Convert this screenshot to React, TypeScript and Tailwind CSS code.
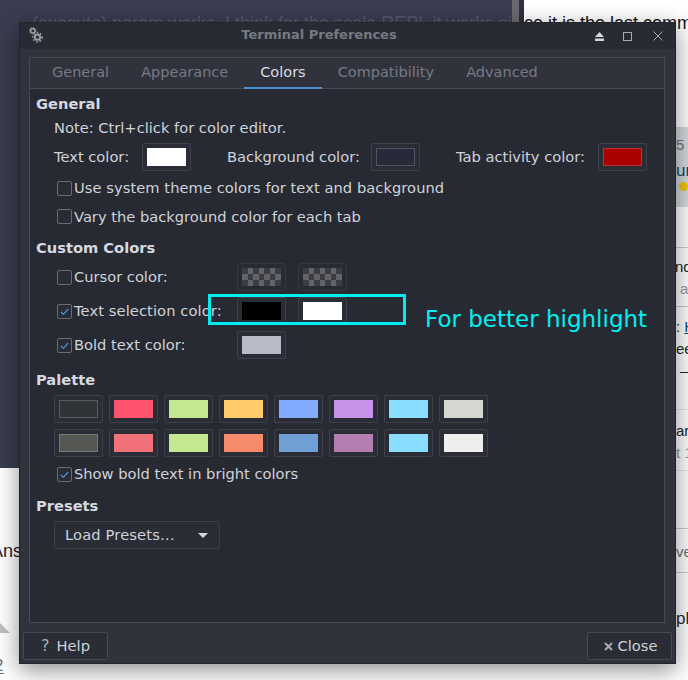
const tabs = ["General", "Appearance", "Colors", "Compatibility", "Advanced"];

const paletteTop = ["#2e3436", "#ff5370", "#c3e88d", "#ffcb6b", "#82aaff", "#c792ea", "#89ddff", "#d3d7cf"];
const paletteBottom = ["#555753", "#f07178", "#c3e88d", "#f78c6c", "#6f9fd4", "#b57eb0", "#89ddff", "#eeeeec"];

function Swatch({ color, outlined }: { color: string; outlined?: boolean }) {
  return (
    <div className="flex h-7 w-[49px] shrink-0 items-center justify-center rounded-[2px] border border-[#3d3f4a] bg-[#2a2c36]">
      <div
        className={`h-[18px] w-[39px] ${outlined ? "border border-white/20" : ""}`}
        style={{ backgroundColor: color }}
      />
    </div>
  );
}

function EmptySwatch() {
  const cells = Array.from({ length: 21 }, (_, i) => i);
  return (
    <div className="flex h-7 w-[49px] shrink-0 items-center justify-center rounded-[2px] border border-[#343640] bg-[#292b34]">
      <div className="grid h-[18px] w-[39px] grid-cols-7 grid-rows-3">
        {cells.map((c) => (
          <div key={c} className={c % 2 === 0 ? "bg-[#3c3d42]" : "bg-[#626368]"} />
        ))}
      </div>
    </div>
  );
}

function Check({ checked }: { checked?: boolean }) {
  return (
    <div className="flex h-[15px] w-[15px] shrink-0 items-center justify-center rounded-[2px] border border-[#6a6c74] bg-[#2a2c35]">
      {checked && (
        <svg width="11" height="11" viewBox="0 0 11 11" fill="none">
          <path d="M2 6l2.4 2.4L9.2 3" stroke="#4a90d9" strokeWidth="1.3" />
        </svg>
      )}
    </div>
  );
}

function Heading({ children, className }: { children: string; className?: string }) {
  return <div className={`flex h-5 items-center font-bold text-[#d5d9e0] ${className ?? ""}`}>{children}</div>;
}

function GearsIcon() {
  return (
    <svg width="14" height="16" viewBox="0 0 14 16" fill="none" className="text-[#9a9ca2]">
      <circle cx="3.8" cy="3.8" r="2.2" stroke="currentColor" strokeWidth="1.6" />
      <circle cx="3.8" cy="3.8" r="3.2" stroke="currentColor" strokeWidth="1" strokeDasharray="1.2 1.3" />
      <circle cx="8.5" cy="10.2" r="2.6" stroke="currentColor" strokeWidth="2" />
      <circle cx="8.5" cy="10.2" r="4.6" stroke="currentColor" strokeWidth="1.6" strokeDasharray="1.6 1.8" />
    </svg>
  );
}

function Background() {
  return (
    <div className="absolute inset-0 overflow-hidden bg-white font-['Liberation_Sans',sans-serif] text-[#242729]">
      {/* dark window behind */}
      <div className="absolute left-0 top-0 flex h-[468px] w-[524px] bg-[#3a3d50]">
        <div className="flex-1 overflow-hidden whitespace-nowrap pl-[32px] pt-[10px] text-[18px] text-[#55586b]">
          (execute) param works, I think for the scala REPL it works since
        </div>
        <div className="w-[7px] bg-[#6a6a70]" />
        <div className="w-[5px] bg-[#2f3140]" />
      </div>

      {/* page on the right, only its edge is visible */}
      <div className="absolute left-[524px] top-0 w-[164px] overflow-hidden whitespace-nowrap text-[15px]">
        <div className="h-[127px] pt-[10px] text-[18px] text-[#111]">ce it is the last comm</div>
        <div className="h-[80px] bg-[#d3d8dc] pl-[152px] pt-[7px] text-[#6a737c]">
          <div className="h-[24px]">5 '</div>
          <div className="h-[24px] text-[17px] text-[#0c4a75]">un</div>
          <div className="ml-[3px] h-[9px] w-[9px] rounded-full bg-[#f1c40f]" />
        </div>
        <div className="h-[40px]" />
        <div className="h-[59px] border-t border-[#c8ccd0] pl-[152px] pt-[8px]">
          <div className="-ml-[1px] h-[22px]">nd</div>
          <div className="ml-[4px] text-[#9199a1]">a</div>
        </div>
        <div className="h-[103px] border-t border-[#c8ccd0] pl-[152px] pt-[9px] leading-[22px]">
          <div>: <span className="text-[#0c4a75] underline">H</span></div>
          <div>ee</div>
          <div className="ml-[4px]">—</div>
        </div>
        <div className="h-[61px] border-t border-[#e4e6e8] pl-[152px] pt-[10px] leading-[22px]">
          <div>art</div>
          <div className="text-[#9199a1]">t 1</div>
        </div>
        <div className="h-[58px] border-t border-[#e4e6e8]" />
        <div className="h-[44px] border-t border-[#c8ccd0] pl-[152px] pt-[12px] text-[#6a737c]">ve</div>
        <div className="h-[100px] border-t border-[#c8ccd0] pl-[152px] pt-[33px] text-[17px]">pl</div>
      </div>

      {/* bits of the page on the left */}
      <div className="absolute left-[-9px] top-[538px] text-[18px]">Ans</div>
      <div className="absolute left-0 top-[623px] h-0 w-0 border-b-[10px] border-r-[10px] border-b-[#bbc0c4] border-r-transparent" />
      <div className="absolute left-[-6px] top-[653px] text-[17px] text-[#6a737c]">2</div>
      <div className="absolute left-0 top-[673px] h-px w-[4px] bg-[#6a737c]" />
    </div>
  );
}

function Dialog() {
  return (
    <div className="absolute left-[19px] top-[22px] flex h-[642px] w-[657px] flex-col border border-[#22242c] bg-[#30323c] text-[14.67px] text-[#cfd3da] shadow-[0_6px_22px_rgba(0,0,0,0.45)]">
      {/* title bar */}
      <div className="relative flex h-[26px] shrink-0 items-center justify-center bg-[#292b34] pb-[3px] pr-[57px]">
        <div className="absolute left-[9px] top-[4px]">
          <GearsIcon />
        </div>
        <span className="text-[13px] font-bold text-[#777982]">Terminal Preferences</span>
        <div className="absolute right-[10px] top-[8px] flex items-center gap-[18px] text-[#a9abb1]">
          <svg width="9" height="9" viewBox="0 0 9 9" fill="currentColor" className="text-[#d5d7dc]">
            <path d="M4.5 0L9 5H0zM0 6.5h9V9H0z" />
          </svg>
          <svg width="9" height="9" viewBox="0 0 9 9" fill="none" stroke="currentColor" className="ml-[1px]">
            <rect x="0.5" y="0.5" width="8" height="8" />
          </svg>
          <svg width="10" height="10" viewBox="0 0 10 10" fill="none" stroke="currentColor" className="ml-[3px] mr-[2px]">
            <path d="M0.5 0.5l9 9M9.5 0.5l-9 9" />
          </svg>
        </div>
      </div>

      {/* notebook */}
      <div className="ml-[9px] mr-[10px] mt-[8px] flex h-[566px] flex-col border border-[#484a53]">
        <div className="flex h-[31px] shrink-0 items-center border-b border-[#484a53] bg-[#30323c] pl-[6px] text-[14.5px]">
          {tabs.map((t) => (
            <div
              key={t}
              className={`relative flex h-full items-center px-4 ${t === "Colors" ? "text-[#d9dce2]" : "text-[#777a84]"}`}
            >
              {t}
              {t === "Colors" && <div className="absolute bottom-[-1px] left-0 right-0 h-[2px] bg-[#4a90d9]" />}
            </div>
          ))}
        </div>

        <div className="flex-1 bg-[#282a33] pl-[6px] pt-[5px]">
          <Heading>General</Heading>
          <div className="ml-[18px] mt-1 flex h-5 items-center">Note: Ctrl+click for color editor.</div>

          <div className="ml-[18px] mt-[5px] flex h-7 items-center">
            <span className="w-[88px]">Text color:</span>
            <Swatch color="#ffffff" />
            <span className="ml-[36px] w-[144px]">Background color:</span>
            <Swatch color="#282a3a" outlined />
            <span className="ml-[36px] w-[142px]">Tab activity color:</span>
            <Swatch color="#aa0000" outlined />
          </div>

          <div className="ml-[21px] mt-[10px] flex h-[15px] items-center gap-[2px]">
            <Check />
            <span className="pb-[2px] tracking-[0.06px]">Use system theme colors for text and background</span>
          </div>
          <div className="ml-[21px] mt-[13px] flex h-[15px] items-center gap-[2px]">
            <Check />
            <span>Vary the background color for each tab</span>
          </div>

          <Heading className="mt-[14px]">Custom Colors</Heading>

          <div className="ml-[21px] mt-[5px] flex h-7 items-center">
            <Check />
            <span className="ml-[2px] w-[163px]">Cursor color:</span>
            <EmptySwatch />
            <div className="ml-3">
              <EmptySwatch />
            </div>
          </div>
          <div className="ml-[21px] mt-[6px] flex h-7 items-center">
            <Check checked />
            <span className="ml-[2px] w-[163px] tracking-[0.1px]">Text selection color:</span>
            <Swatch color="#000000" />
            <div className="ml-3">
              <Swatch color="#ffffff" />
            </div>
          </div>
          <div className="ml-[21px] mt-[6px] flex h-7 items-center">
            <Check checked />
            <span className="ml-[2px] w-[163px]">Bold text color:</span>
            <Swatch color="#b8bcc8" />
          </div>

          <Heading className="mt-[11px]">Palette</Heading>
          <div className="ml-[18px] mt-[5px] flex flex-col gap-[6px]">
            {[paletteTop, paletteBottom].map((row, r) => (
              <div key={r} className="flex gap-[6px]">
                {row.map((c, i) => (
                  <Swatch key={i} color={c} outlined={i === 0} />
                ))}
              </div>
            ))}
          </div>

          <div className="ml-[21px] mt-[10px] flex h-[15px] items-center gap-[2px]">
            <Check checked />
            <span className="pb-[2px]">Show bold text in bright colors</span>
          </div>

          <Heading className="mt-[14px]">Presets</Heading>
          <div className="ml-[18px] mt-[5px] flex h-7 w-[166px] items-center justify-between rounded-[2px] border border-[#3d3f4a] bg-[#2a2c36] pl-[10px] pr-[11px]">
            <span className="tracking-[0.15px]">Load Presets…</span>
            <svg width="10" height="5" viewBox="0 0 10 5" fill="#d5d7dc">
              <path d="M0 0h10L5 5z" />
            </svg>
          </div>
        </div>
      </div>

      {/* footer buttons */}
      <div className="ml-[3px] mr-[3px] mt-[9px] flex justify-between">
        <div className="flex h-7 w-[85px] items-center justify-center gap-[7px] rounded-[2px] border border-[#484a53] bg-[#2a2c36]">
          <span className="text-[16px] text-[#a9abb1]">?</span>
          <span>Help</span>
        </div>
        <div className="flex h-7 w-[85px] items-center justify-center gap-[5px] rounded-[2px] border border-[#484a53] bg-[#2a2c36] pl-[2px]">
          <svg width="9" height="9" viewBox="0 0 9 9" fill="none" stroke="#a9abb1" strokeWidth="2">
            <path d="M1 1l7 7M8 1L1 8" />
          </svg>
          <span>Close</span>
        </div>
      </div>
    </div>
  );
}

export default function App() {
  return (
    <div className="relative h-[680px] w-[688px] overflow-hidden font-['DejaVu_Sans',sans-serif]">
      <Background />
      <Dialog />

      {/* annotation drawn on top of the screenshot */}
      <div className="absolute left-[208px] top-[294px] h-[31px] w-[198px] border-[3px] border-[#00eeee]" />
      <div className="absolute left-[425px] top-[304px] text-[23px] leading-[30px] text-[#00f0f0]">For better highlight</div>
    </div>
  );
}
